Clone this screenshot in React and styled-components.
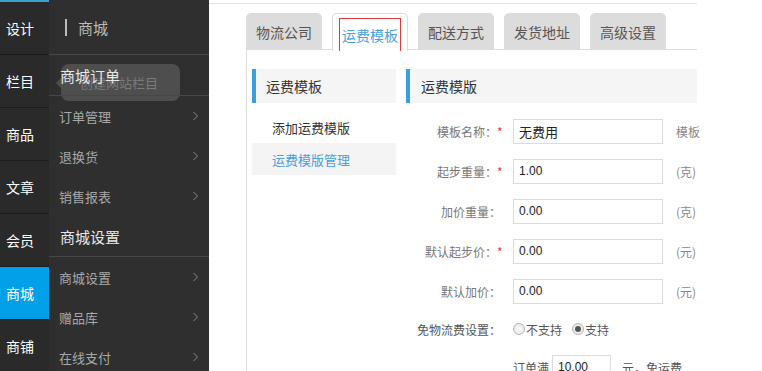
import React from "react";
import styled, { createGlobalStyle } from "styled-components";

const GlobalStyle = createGlobalStyle`
  html, body {
    margin: 0;
    padding: 0;
    background: #fff;
    font-family: "Noto Sans CJK SC", "Liberation Sans", sans-serif;
  }
  * { box-sizing: border-box; }
`;

const Page = styled.div`
  display: flex;
  width: 762px;
  height: 371px;
  overflow: hidden;
`;

/* ---------- first rail ---------- */
const Rail = styled.nav`
  width: 49px;
  flex-shrink: 0;
  background: #2a2a2a;
  border-top: 2px solid #3b9fcf;
`;

const RailItem = styled.div`
  height: 53px;
  display: flex;
  align-items: center;
  padding-left: 6px;
  font-size: 14px;
  color: #fff;
  border-bottom: 1px solid #1d1d1d;
  background: ${(p) => (p.active ? "#00a1e9" : "transparent")};
`;

/* ---------- second nav ---------- */
const SubNav = styled.nav`
  position: relative;
  width: 160px;
  flex-shrink: 0;
  background: #2f2f2f;
`;

const SubHead = styled.div`
  height: 55px;
  display: flex;
  align-items: center;
  padding-left: 16px;
  border-bottom: 1px solid #474747;
  color: #bbb;
  font-size: 15px;

  i {
    width: 2px;
    height: 17px;
    background: #bbb;
    margin-right: 11px;
  }
`;

const Section = styled.div`
  height: 41px;
  display: flex;
  align-items: center;
  padding-left: 11px;
  border-bottom: 1px solid #474747;
  color: #e8e8e8;
  font-size: 15px;
  position: relative;
  z-index: 2;
`;

const NavLink = styled.div`
  height: 40px;
  display: flex;
  align-items: center;
  justify-content: space-between;
  padding: 0 10px 0 10px;
  color: #a8a8a8;
  font-size: 13px;
`;

const Tip = styled.div`
  position: absolute;
  left: 12px;
  top: 64px;
  width: 119px;
  height: 37px;
  border-radius: 8px;
  background: rgba(110, 110, 110, 0.5);
  color: #7a7a7a;
  font-size: 13px;
  display: flex;
  align-items: center;
  padding-left: 19px;
  z-index: 1;

  &::before {
    content: "";
    position: absolute;
    left: -5px;
    top: 14px;
    border: 5px solid transparent;
    border-left: 0;
    border-right-color: rgba(110, 110, 110, 0.5);
  }
`;

const Chevron = () => (
  <svg width="7" height="10" viewBox="0 0 7 10">
    <polyline points="1.5,1 5.5,5 1.5,9" fill="none" stroke="#8a8a8a" strokeWidth="1" />
  </svg>
);

/* ---------- main ---------- */
const Main = styled.main`
  flex: 1;
  padding-top: 3px;
`;

const Frame = styled.div`
  width: 488px;
  border-top: 1px solid #e2e2e2;
  padding: 9px 0 0 37px;
`;

const Tabs = styled.div`
  display: flex;
  gap: 10px;
  height: 37px;
  border-bottom: 1px solid #dcdcdc;
`;

const Tab = styled.div`
  width: 76px;
  height: ${(p) => (p.active ? "38px" : "37px")};
  border-radius: 5px 5px 0 0;
  display: flex;
  align-items: center;
  justify-content: center;
  font-size: 14px;
  color: ${(p) => (p.active ? "#4a9fe0" : "#555")};
  background: ${(p) => (p.active ? "#fff" : "#dcdcdc")};
  border: ${(p) => (p.active ? "1px solid #dcdcdc" : "none")};
  border-bottom: none;
  padding-top: ${(p) => (p.active ? "4px" : "0")};

  span {
    border: 1px solid #e0393c;
    border-bottom: none;
    height: 100%;
    padding: 0 2px;
    display: flex;
    align-items: center;
  }
`;

const Panel = styled.div`
  display: flex;
  gap: 10px;
  border-left: 1px solid #dcdcdc;
  padding: 19px 0 0 5px;
  height: 330px;
`;

const Aside = styled.div`
  width: 144px;
  flex-shrink: 0;
`;

const Body = styled.div`
  flex: 1;
  min-width: 0;
`;

const BoxHead = styled.div`
  height: 34px;
  display: flex;
  align-items: center;
  background: #f5f5f5;
  border-left: 4px solid #39a0df;
  padding-left: ${(p) => p.pad || 10}px;
  font-size: 14px;
  color: #333;
`;

const AsideList = styled.div`
  margin-top: 8px;
`;

const AsideLink = styled.div`
  height: 32px;
  display: flex;
  align-items: center;
  padding-left: 20px;
  font-size: 13px;
  color: ${(p) => (p.active ? "#4a9fe0" : "#333")};
  background: ${(p) => (p.active ? "#f4f4f4" : "transparent")};
`;

const Form = styled.div`
  margin-top: 8px;
`;

const Row = styled.div`
  height: ${(p) => p.h || 40}px;
  display: flex;
  align-items: center;
  font-size: 12px;
  color: #666;
  white-space: nowrap;
`;

const Label = styled.label`
  width: 97px;
  flex-shrink: 0;
  display: flex;
  justify-content: flex-end;
  padding-right: ${(p) => (p.req ? 0 : 2)}px;
  margin-right: 10px;
  white-space: nowrap;
  color: ${(p) => (p.dark ? "#555" : "#777")};

  em {
    font-style: normal;
    color: #e0393c;
    width: 6px;
  }
`;

const Input = styled.div`
  width: ${(p) => p.w || 150}px;
  height: 25px;
  border: 1px solid #dcdcdc;
  background: #fff;
  display: flex;
  align-items: center;
  padding-left: 5px;
  font-family: "Liberation Sans", "Noto Sans CJK SC", sans-serif;
  font-size: ${(p) => (p.big ? 13 : 12)}px;
  color: #222;
  flex-shrink: 0;
`;

const Unit = styled.span`
  margin-left: 13px;
  color: #888;
  white-space: nowrap;
`;

const Radio = styled.span`
  width: 12px;
  height: 12px;
  border-radius: 50%;
  border: 1px solid #b5b5b5;
  background: radial-gradient(circle, #fafafa, #e4e4e4);
  display: inline-flex;
  align-items: center;
  justify-content: center;
  margin-right: 1px;

  &::after {
    content: "";
    width: 6px;
    height: 6px;
    border-radius: 50%;
    background: ${(p) => (p.checked ? "#555" : "transparent")};
  }
`;

const Choice = styled.span`
  display: inline-flex;
  align-items: center;
  margin-right: 10px;
  color: #555;
`;

const Inline = styled.span`
  color: #555;
  margin: 0 ${(p) => p.mr || 0}px 0 ${(p) => p.ml || 0}px;
`;

const rail = ["设计", "栏目", "商品", "文章", "会员", "商城", "商铺"];
const tabs = ["物流公司", "运费模板", "配送方式", "发货地址", "高级设置"];
const fields = [
  { label: "模板名称：", req: true, value: "无费用", unit: "模板", big: true },
  { label: "起步重量：", req: true, value: "1.00", unit: "(克)" },
  { label: "加价重量：", value: "0.00", unit: "(克)" },
  { label: "默认起步价：", req: true, value: "0.00", unit: "(元)" },
  { label: "默认加价：", value: "0.00", unit: "(元)" },
];

export default function App() {
  return (
    <Page>
      <GlobalStyle />
      <Rail>
        {rail.map((r) => (
          <RailItem key={r} active={r === "商城"}>
            {r}
          </RailItem>
        ))}
      </Rail>

      <SubNav>
        <SubHead>
          <i />
          商城
        </SubHead>
        <Section>商城订单</Section>
        <Tip>创建网站栏目</Tip>
        {["订单管理", "退换货", "销售报表"].map((t) => (
          <NavLink key={t}>
            {t}
            <Chevron />
          </NavLink>
        ))}
        <Section>商城设置</Section>
        {["商城设置", "赠品库", "在线支付"].map((t) => (
          <NavLink key={t}>
            {t}
            <Chevron />
          </NavLink>
        ))}
      </SubNav>

      <Main>
        <Frame>
          <Tabs>
            {tabs.map((t) => (
              <Tab key={t} active={t === "运费模板"}>
                {t === "运费模板" ? <span>{t}</span> : t}
              </Tab>
            ))}
          </Tabs>
          <Panel>
            <Aside>
              <BoxHead>运费模板</BoxHead>
              <AsideList>
                <AsideLink>添加运费模版</AsideLink>
                <AsideLink active>运费模版管理</AsideLink>
              </AsideList>
            </Aside>
            <Body>
              <BoxHead pad={11}>运费模版</BoxHead>
              <Form>
                {fields.map((f) => (
                  <Row key={f.label}>
                    <Label req={f.req}>
                      {f.label}
                      {f.req && <em>*</em>}
                    </Label>
                    <Input big={f.big}>{f.value}</Input>
                    <Unit>{f.unit}</Unit>
                  </Row>
                ))}
                <Row h={36}>
                  <Label dark>免物流费设置：</Label>
                  <Choice>
                    <Radio />
                    不支持
                  </Choice>
                  <Choice>
                    <Radio checked />
                    支持
                  </Choice>
                </Row>
                <Row h={40}>
                  <Label />
                  <Inline mr={3}>订单满</Inline>
                  <Input w={59}>10.00</Input>
                  <Inline ml={11}>元，免运费</Inline>
                </Row>
              </Form>
            </Body>
          </Panel>
        </Frame>
      </Main>
    </Page>
  );
}
